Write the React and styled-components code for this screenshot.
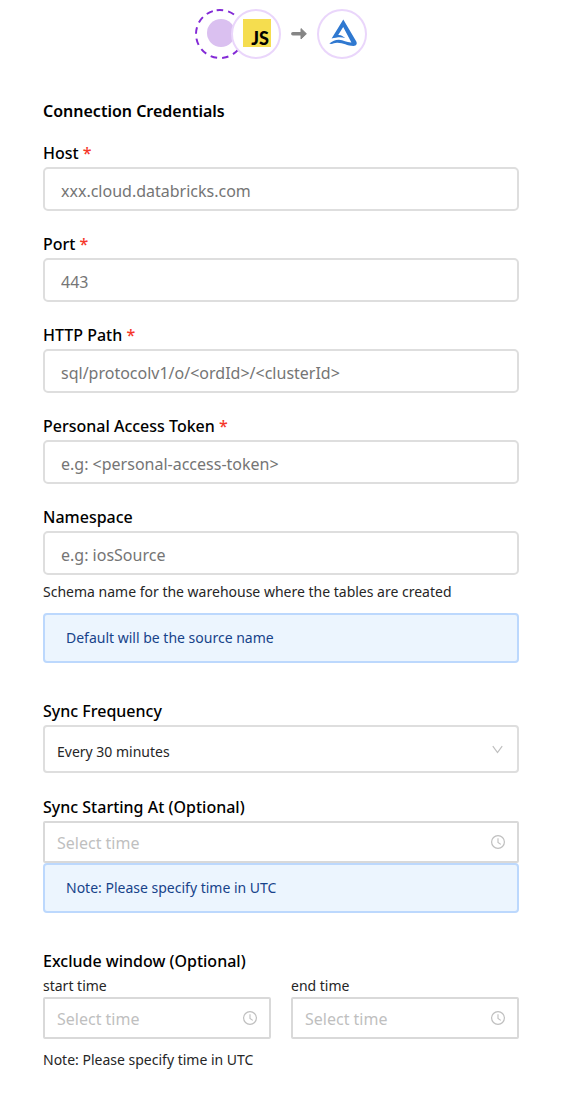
import React, { useId } from "react";
import styled, { createGlobalStyle } from "styled-components";

const GlobalStyle = createGlobalStyle`
  *, *::before, *::after { box-sizing: border-box; }
  body {
    margin: 0;
    background: #fff;
    color: #262626;
    font-family: "Noto Sans", "Open Sans", sans-serif;
    font-size: 14px;
    line-height: 22px;
  }
`;

const Page = styled.main`
  padding: 9px 53px 22px 43px;
`;

const Flow = styled.header`
  display: flex;
  align-items: center;
  justify-content: center;
  margin-bottom: 40px;
`;

const Badge = styled.div`
  display: flex;
  align-items: center;
  justify-content: center;
  width: 50px;
  height: 50px;
  flex: none;
  border: 2px solid #ead6fb;
  border-radius: 50%;
  background: #fff;
`;

const SourceBadge = styled(Badge)`
  position: relative;
  margin-left: -14px;
`;

const Logo = styled.svg`
  flex: none;
  overflow: visible;
`;

const ArrowIcon = styled.svg`
  flex: none;
  margin: 0 10px;
`;

const Title = styled.h1`
  margin: 0 0 18px;
  color: #000;
  font-size: 16px;
  font-weight: 600;
  line-height: 24px;
`;

const Field = styled.div`
  display: flex;
  flex-direction: column;
  gap: 2px;
  margin-bottom: ${(p) => p.$space || "21px"};
`;

const Label = styled.label`
  color: #000;
  font-size: 16px;
  font-weight: 500;
  line-height: 24px;
`;

const Required = styled.span`
  color: #f5372a;
`;

const TextInput = styled.input`
  width: 100%;
  height: 44px;
  padding: 4px 16px 0;
  border: 2px solid #dedede;
  border-radius: 5px;
  background: #fff;
  color: #262626;
  font: inherit;
  font-size: 16px;
  &::placeholder { color: #757575; opacity: 1; }
`;

const Hint = styled.p`
  margin: 0;
`;

const Help = styled.div`
  display: flex;
  flex-direction: column;
  gap: 10px;
  margin-bottom: 36px;
`;

const Alert = styled.div`
  padding: 12px 21px;
  border: 2px solid #bcd8fd;
  border-radius: 4px;
  background: #ecf5fe;
  color: #17438a;
`;

const Control = styled.div`
  display: grid;
  align-items: center;
  & > * { grid-area: 1 / 1; }
  & > svg { justify-self: end; margin-right: 14px; pointer-events: none; }
`;

const Select = styled.select`
  appearance: none;
  width: 100%;
  height: 48px;
  padding: 5px 36px 0 12px;
  border: 2px solid #dedede;
  border-radius: 4px;
  background: #fff;
  color: #262626;
  font: inherit;
`;

const TimeInput = styled.input`
  width: 100%;
  height: 42px;
  padding: 2px 36px 0 12px;
  border: 2px solid #d9d9d9;
  border-radius: 2px;
  background: #fff;
  color: #262626;
  font: inherit;
  font-size: 16px;
  &::placeholder { color: #bfbfbf; opacity: 1; }
`;

const Window = styled.fieldset`
  min-width: 0;
  margin: 0;
  padding: 0;
  border: 0;
`;

const Legend = styled.legend`
  padding: 0;
  color: #000;
  font-size: 16px;
  font-weight: 500;
  line-height: 24px;
`;

const Columns = styled.div`
  display: grid;
  grid-template-columns: 1fr 1fr;
  gap: 20px;
  margin: 2px 0 10px;
`;

const SmallLabel = styled.label`
  display: block;
  line-height: 22px;
`;

function ClockIcon() {
  return (
    <svg width="14" height="14" viewBox="0 0 14 14" fill="none" stroke="#bfbfbf" aria-hidden="true">
      <circle cx="7" cy="7" r="6.4" strokeWidth="1.2" />
      <path d="M7 3.2v4.2l2.8 2" strokeWidth="1.1" />
    </svg>
  );
}

function ChevronIcon() {
  return (
    <svg width="14" height="14" viewBox="0 0 14 14" fill="none" stroke="#bfbfbf" strokeWidth="1.2" aria-hidden="true">
      <path d="M1.8 4.2L6.500 10.600l4.700-6.400" />
    </svg>
  );
}

function TimePicker({ id }) {
  return (
    <Control>
      <TimeInput id={id} type="text" placeholder="Select time" />
      <ClockIcon />
    </Control>
  );
}

function TextField({ label, placeholder, required, space }) {
  const id = useId();
  return (
    <Field $space={space}>
      <Label htmlFor={id}>
        {label}
        {required && <Required> *</Required>}
      </Label>
      <TextInput id={id} type="text" placeholder={placeholder} required={required} />
    </Field>
  );
}

export default function App() {
  return (
    <>
      <GlobalStyle />
      <Page>
        <Flow>
          <Logo width="50" height="50" viewBox="0 0 50 50" aria-hidden="true">
            <circle
              cx="25"
              cy="25"
              r="24"
              fill="none"
              stroke="#832ad6"
              strokeWidth="2"
              strokeDasharray="6.6 5"
              transform="rotate(-98 25 25)"
            />
            <circle cx="26" cy="24" r="14" fill="#dac0f0" />
          </Logo>
          <SourceBadge>
            <Logo width="28" height="28" viewBox="0 0 28 28" role="img" aria-label="JavaScript">
              <rect x="1" y="-1" width="28" height="28" fill="#f5dd4f" />
              <text x="27" y="25" textAnchor="end" fontFamily="Lato, sans-serif" fontWeight="900" fontSize="18" fill="#000">
                JS
              </text>
            </Logo>
          </SourceBadge>
          <ArrowIcon width="16" height="14" viewBox="0 0 16 14" aria-hidden="true">
            <path d="M1.8 6.800H10" stroke="#858585" strokeWidth="3.4" strokeLinecap="round" />
            <path d="M10 1.600L15.400 6.800l-5.400 5.200z" fill="#858585" stroke="#858585" strokeLinejoin="round" />
          </ArrowIcon>
          <Badge>
            <Logo width="30" height="30" viewBox="0 0 30 30" role="img" aria-label="Delta Lake">
              <path
                fill="#2f78d0"
                d="M16.3.6L29.3 22.600C30.500 25 29.200 27 26.600 27C20 27 16 23.600 10 23.800C7 24 5 25.600 2.300 24.600C5.500 21.800 8.500 20.600 12 20.700C16.500 20.900 20 23.600 24.400 23.400L16.200 8L11.200 16C14.500 15.800 16 17.500 18.200 19C13.500 17.600 9 18.600 4.600 19.600Z"
              />
            </Logo>
          </Badge>
        </Flow>

        <Title>Connection Credentials</Title>

        <TextField label="Host" placeholder="xxx.cloud.databricks.com" required />
        <TextField label="Port" placeholder="443" required />
        <TextField label="HTTP Path" placeholder="sql/protocolv1/o/<ordId>/<clusterId>" required />
        <TextField label="Personal Access Token" placeholder="e.g: <personal-access-token>" required />
        <TextField label="Namespace" placeholder="e.g: iosSource" space="6px" />
        <Help>
          <Hint>Schema name for the warehouse where the tables are created</Hint>
          <Alert>Default will be the source name</Alert>
        </Help>

        <Field $space="22px">
          <Label htmlFor="frequency">Sync Frequency</Label>
          <Control>
            <Select id="frequency" defaultValue="30">
              <option value="30">Every 30 minutes</option>
            </Select>
            <ChevronIcon />
          </Control>
        </Field>

        <Field $space="36px">
          <Label htmlFor="starting">Sync Starting At (Optional)</Label>
          <div>
            <TimePicker id="starting" />
            <Alert>Note: Please specify time in UTC</Alert>
          </div>
        </Field>

        <Window>
          <Legend>Exclude window (Optional)</Legend>
          <Columns>
            <div>
              <SmallLabel htmlFor="start">start time</SmallLabel>
              <TimePicker id="start" />
            </div>
            <div>
              <SmallLabel htmlFor="end">end time</SmallLabel>
              <TimePicker id="end" />
            </div>
          </Columns>
        </Window>
        <Hint>Note: Please specify time in UTC</Hint>
      </Page>
    </>
  );
}
